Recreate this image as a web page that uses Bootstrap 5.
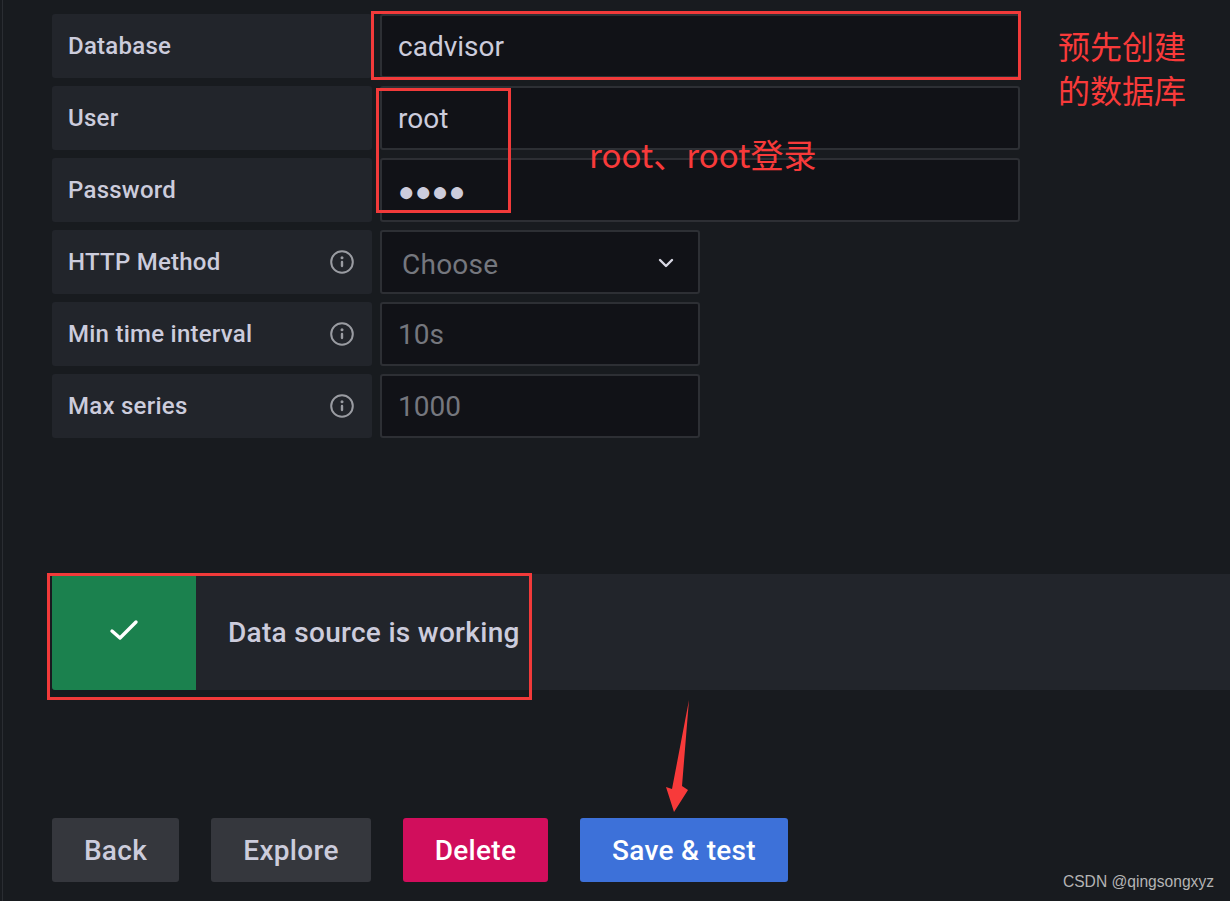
<!DOCTYPE html>
<html lang="en">

<head>
    <meta charset="UTF-8">
    <meta name="viewport" content="width=device-width, initial-scale=1.0">
    <title>Data source settings</title>
    <link href="https://cdn.jsdelivr.net/npm/bootstrap@5.3.0/dist/css/bootstrap.min.css" rel="stylesheet">
    <style>
        html, body {
            height: 100%;
        }

        body {
            background-color: #181b1f;
            color: #ccccdc;
            font-family: Roboto, "Noto Sans CJK SC", sans-serif;
            overflow: hidden;
        }

        .page-wrap {
            position: relative;
            width: 1230px;
            height: 901px;
            padding: 14px 0 0 52px;
        }

        .side-line {
            position: absolute;
            left: 2px;
            top: 0;
            width: 1px;
            height: 100%;
            background: #2a2d32;
        }

        .field-row {
            height: 64px;
            margin-bottom: 8px;
            gap: 8px;
        }

        .field-label {
            width: 320px;
            background: #22252b;
            border-radius: 3px;
            padding: 0 18px 0 16px;
            font-size: 24px;
            letter-spacing: 0.25px;
            font-weight: 500;
            color: #ccccdc;
        }

        .field-input.form-control,
        .field-select {
            background: #111217;
            border: 2px solid #2d2f34;
            border-radius: 3px;
            color: #ccccdc;
            font-size: 28px;
            padding: 0 16px;
            height: 64px;
            box-shadow: none;
        }

        .field-input.form-control::placeholder {
            color: #75777e;
            opacity: 1;
        }

        .field-input.pw-dots {
            font-family: "Liberation Sans", sans-serif;
            font-size: 28px;
            padding-top: 3px;
        }

        .w-wide {
            width: 640px;
        }

        .w-short {
            width: 320px;
        }

        .field-select {
            color: #75777e;
            padding: 6px 24px 0 20px;
            letter-spacing: 0.25px;
        }

        .field-select svg {
            margin-top: -4px;
        }

        .status-bar {
            height: 116px;
            margin-top: 136px;
            background: #22252b;
            border-radius: 3px 0 0 3px;
        }

        .status-icon {
            width: 144px;
            background: #1b814e;
            border-radius: 3px 0 0 3px;
            padding-bottom: 4px;
        }

        .status-text {
            padding: 2px 0 0 32px;
            font-size: 28px;
            letter-spacing: 0.3px;
            font-weight: 500;
            color: #ccccdc;
        }

        .action-row {
            margin-top: 128px;
            gap: 32px;
        }

        .action-btn {
            height: 64px;
            border: 0;
            border-radius: 3px;
            font-size: 28px;
            letter-spacing: 0.3px;
            font-weight: 500;
            padding: 2px 0 0;
        }

        .btn-back {
            width: 127px;
        }

        .btn-explore {
            width: 160px;
        }

        .btn-back,
        .btn-explore {
            background: #35373d;
            color: #ccccdc;
        }

        .btn-delete {
            width: 145px;
            background: #d10e5c;
            color: #fff;
        }

        .btn-save {
            width: 208px;
            background: #3d71d9;
            color: #fff;
        }

        /* red annotations drawn over the screenshot */
        .note-box {
            position: absolute;
            border: 3px solid #f23a3a;
            pointer-events: none;
        }

        .note-text {
            position: absolute;
            color: #f83a3a;
            font-family: "Noto Sans CJK SC", sans-serif;
            font-size: 32px;
            line-height: 44px;
            white-space: nowrap;
        }

        .note-wide {
            font-size: 33px;
        }

        .note-arrow {
            position: absolute;
            left: 660px;
            top: 698px;
        }

        .watermark {
            position: absolute;
            right: 16px;
            bottom: 9px;
            font-family: "Liberation Sans", sans-serif;
            font-size: 15.6px;
            line-height: 20px;
            color: #b4b4b4;
        }
    </style>
</head>

<body>
    <div class="page-wrap">
        <div class="side-line"></div>

        <div class="d-flex field-row">
            <label class="field-label d-flex align-items-center">Database</label>
            <input type="text" class="form-control field-input w-wide" value="cadvisor">
        </div>
        <div class="d-flex field-row">
            <label class="field-label d-flex align-items-center">User</label>
            <input type="text" class="form-control field-input w-wide" value="root">
        </div>
        <div class="d-flex field-row">
            <label class="field-label d-flex align-items-center">Password</label>
            <input type="text" class="form-control field-input pw-dots w-wide" value="●●●●">
        </div>
        <div class="d-flex field-row">
            <label class="field-label d-flex align-items-center justify-content-between">
                HTTP Method
                <svg width="24" height="24" viewBox="0 0 24 24" fill="none"><circle cx="12" cy="12" r="10.8" stroke="#9a9ca2" stroke-width="2"/><circle cx="12" cy="7.8" r="1.5" fill="#9a9ca2"/><rect x="10.8" y="10.8" width="2.4" height="6.4" rx="1.1" fill="#9a9ca2"/></svg>
            </label>
            <div class="field-select w-short d-flex align-items-center justify-content-between">
                <span>Choose</span>
                <svg width="16" height="10" viewBox="0 0 16 10" fill="none"><path d="M2 2l6 6 6-6" stroke="#d8d8e4" stroke-width="2.4" stroke-linecap="round" stroke-linejoin="round"/></svg>
            </div>
        </div>
        <div class="d-flex field-row">
            <label class="field-label d-flex align-items-center justify-content-between">
                Min time interval
                <svg width="24" height="24" viewBox="0 0 24 24" fill="none"><circle cx="12" cy="12" r="10.8" stroke="#9a9ca2" stroke-width="2"/><circle cx="12" cy="7.8" r="1.5" fill="#9a9ca2"/><rect x="10.8" y="10.8" width="2.4" height="6.4" rx="1.1" fill="#9a9ca2"/></svg>
            </label>
            <input type="text" class="form-control field-input w-short" placeholder="10s">
        </div>
        <div class="d-flex field-row">
            <label class="field-label d-flex align-items-center justify-content-between">
                Max series
                <svg width="24" height="24" viewBox="0 0 24 24" fill="none"><circle cx="12" cy="12" r="10.8" stroke="#9a9ca2" stroke-width="2"/><circle cx="12" cy="7.8" r="1.5" fill="#9a9ca2"/><rect x="10.8" y="10.8" width="2.4" height="6.4" rx="1.1" fill="#9a9ca2"/></svg>
            </label>
            <input type="text" class="form-control field-input w-short" placeholder="1000">
        </div>

        <div class="status-bar d-flex">
            <div class="status-icon d-flex align-items-center justify-content-center">
                <svg width="30" height="22" viewBox="0 0 30 22" fill="none"><path d="M3 12l8 7L27 3" stroke="#fff" stroke-width="3.4" stroke-linecap="round" stroke-linejoin="round"/></svg>
            </div>
            <div class="status-text d-flex align-items-center">Data source is working</div>
        </div>

        <div class="d-flex action-row">
            <button class="btn action-btn btn-back">Back</button>
            <button class="btn action-btn btn-explore">Explore</button>
            <button class="btn action-btn btn-delete">Delete</button>
            <button class="btn action-btn btn-save">Save &amp; test</button>
        </div>

        <!-- annotations -->
        <div class="note-box" style="left:371px;top:11px;width:650px;height:69px"></div>
        <div class="note-box" style="left:376px;top:88px;width:135px;height:125px"></div>
        <div class="note-box" style="left:47px;top:573px;width:485px;height:127px"></div>
        <div class="note-text" style="left:1058px;top:23px">预先创建<br>的数据库</div>
        <div class="note-text note-wide" style="left:589px;top:132px">root、root登录</div>
        <svg class="note-arrow" width="36" height="116" viewBox="0 0 36 116"><path d="M29 2L22 88 28 92 14 114 6 89 12 91Z" fill="#f83a3a"/></svg>

        <div class="watermark">CSDN @qingsongxyz</div>
    </div>

    <script src="https://cdn.jsdelivr.net/npm/bootstrap@5.3.0/dist/js/bootstrap.bundle.min.js"></script>
</body>

</html>
